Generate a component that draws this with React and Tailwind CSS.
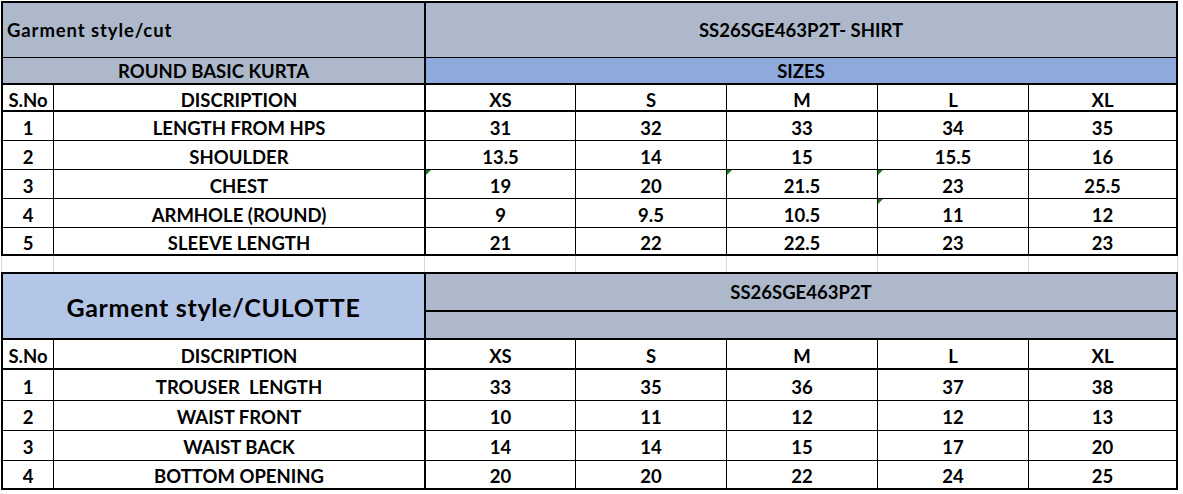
const FONT = { fontFamily: 'Lato, "Liberation Sans", sans-serif' };

const shirtRows = [
  { sno: 1, desc: "LENGTH FROM HPS", vals: ["31", "32", "33", "34", "35"], h: "h-[29px] border-b" },
  { sno: 2, desc: "SHOULDER", vals: ["13.5", "14", "15", "15.5", "16"], h: "h-[29px] border-b" },
  { sno: 3, desc: "CHEST", vals: ["19", "20", "21.5", "23", "25.5"], h: "h-[29px] border-b", flags: [0, 2, 3] },
  { sno: 4, desc: "ARMHOLE (ROUND)", vals: ["9", "9.5", "10.5", "11", "12"], h: "h-[29px] border-b", flags: [3] },
  { sno: 5, desc: "SLEEVE LENGTH", vals: ["21", "22", "22.5", "23", "23"], h: "h-[28px] border-b-2" },
];

const culotteRows = [
  { sno: 1, desc: "TROUSER  LENGTH", vals: ["33", "35", "36", "37", "38"], h: "h-[31px] border-b" },
  { sno: 2, desc: "WAIST FRONT", vals: ["10", "11", "12", "12", "13"], h: "h-[30px] border-b" },
  { sno: 3, desc: "WAIST BACK", vals: ["14", "14", "15", "17", "20"], h: "h-[30px] border-b" },
  { sno: 4, desc: "BOTTOM OPENING", vals: ["20", "20", "22", "24", "25"], h: "h-[29px] border-b-2" },
];

const sizes = ["XS", "S", "M", "L", "XL"];

// size column cells, widths include their right border
const sizeCell = [
  "relative flex w-[150px] shrink-0 items-center justify-center border-r border-solid border-black",
  "relative flex w-[151px] shrink-0 items-center justify-center border-r border-solid border-black",
  "relative flex w-[151px] shrink-0 items-center justify-center border-r border-solid border-black",
  "relative flex w-[151px] shrink-0 items-center justify-center border-r border-solid border-black",
  "relative flex w-[149px] shrink-0 items-center justify-center border-r-2 border-solid border-black",
];

const snoCell = "flex w-[51px] shrink-0 items-center justify-center border-r border-solid border-black";
const descCell = "flex w-[372px] shrink-0 items-center justify-center whitespace-pre border-r-2 border-solid border-black";

function HeaderRow({ h }) {
  return (
    <div className={`flex ${h} border-solid border-black bg-white`}>
      <div className={snoCell}>
        <span className="pt-[6px]">S.No</span>
      </div>
      <div className={descCell}>
        <span className="pt-[6px]">DISCRIPTION</span>
      </div>
      {sizes.map((s, i) => (
        <div key={s} className={sizeCell[i]}>
          <span className="pt-[6px]">{s}</span>
        </div>
      ))}
    </div>
  );
}

function DataRow({ row }) {
  const flags = row.flags || [];
  return (
    <div className={`flex ${row.h} border-solid border-black bg-white`}>
      <div className={snoCell}>
        <span className="pt-[5px]">{row.sno}</span>
      </div>
      <div className={descCell}>
        <span className="pt-[5px]">{row.desc}</span>
      </div>
      {row.vals.map((v, i) => (
        <div key={i} className={sizeCell[i]}>
          {flags.includes(i) && (
            <span className="absolute left-0 top-0 h-0 w-0 border-t-[5px] border-r-[5px] border-solid border-t-[#1c7c1c] border-r-transparent" />
          )}
          <span className="pt-[5px]">{v}</span>
        </div>
      ))}
    </div>
  );
}

function GapRow() {
  return (
    <div className="flex h-[16px] border-l border-solid border-[#dadada]">
      <div className="w-[52px] shrink-0 border-r border-solid border-[#dadada]" />
      <div className="w-[371px] shrink-0 border-r border-solid border-[#dadada]" />
      <div className="w-[151px] shrink-0 border-r border-solid border-[#dadada]" />
      <div className="w-[151px] shrink-0 border-r border-solid border-[#dadada]" />
      <div className="w-[151px] shrink-0 border-r border-solid border-[#dadada]" />
      <div className="w-[151px] shrink-0 border-r border-solid border-[#dadada]" />
      <div className="w-[149px] shrink-0 border-r border-solid border-[#dadada]" />
    </div>
  );
}

export default function App() {
  return (
    <div className="h-[494px] w-[1183px] overflow-hidden bg-white pl-px pt-px text-[18.5px] font-bold text-black" style={FONT}>
      {/* shirt table */}
      <div className="w-[1177px] border-l-2 border-t-2 border-solid border-black">
        <div className="flex h-[55px] border-b border-solid border-black bg-[#adb9ca]">
          <div className="flex w-[423px] shrink-0 items-center border-r-2 border-solid border-black pl-1 pt-[1px] tracking-[0.9px]">
            Garment style/cut
          </div>
          <div className="flex w-[752px] shrink-0 items-center justify-center border-r-2 border-solid border-black pt-[1px]">
            SS26SGE463P2T- SHIRT
          </div>
        </div>
        <div className="flex h-[27px] border-b-2 border-solid border-black">
          <div className="flex w-[423px] shrink-0 items-center justify-center border-r-2 border-solid border-black bg-[#adb9ca] pt-[2px]">
            ROUND BASIC KURTA
          </div>
          <div className="flex w-[752px] shrink-0 items-center justify-center border-r-2 border-solid border-black bg-[#8ea9db] pt-[2px]">
            SIZES
          </div>
        </div>
        <HeaderRow h="h-[27px] border-b-2" />
        {shirtRows.map((r) => (
          <DataRow key={r.sno} row={r} />
        ))}
      </div>

      <GapRow />

      {/* culotte table */}
      <div className="w-[1177px] border-l-2 border-t-2 border-solid border-black">
        <div className="flex h-[66px] border-b-2 border-solid border-black">
          <div className="flex w-[423px] shrink-0 items-center justify-center border-r-2 border-solid border-black bg-[#b4c6e7] pt-[3px] text-[25px] tracking-[0.7px]">
            Garment style/CULOTTE
          </div>
          <div className="flex w-[752px] shrink-0 flex-col bg-[#adb9ca]">
            <div className="flex h-[38px] items-center justify-center border-b-2 border-r-2 border-solid border-black pt-[2px]">
              SS26SGE463P2T
            </div>
            <div className="flex-1 border-r-2 border-solid border-black" />
          </div>
        </div>
        <HeaderRow h="h-[30px] border-b-2" />
        {culotteRows.map((r) => (
          <DataRow key={r.sno} row={r} />
        ))}
      </div>
    </div>
  );
}
